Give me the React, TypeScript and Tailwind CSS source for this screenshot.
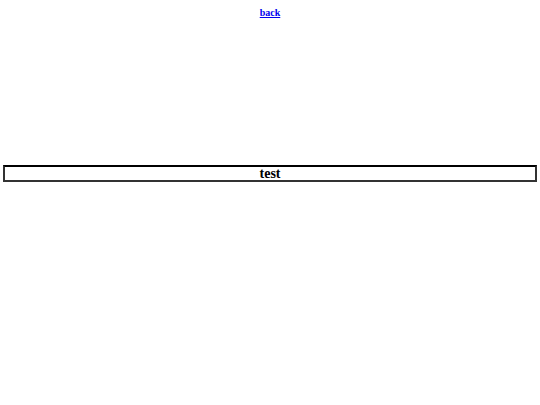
const serif = "[font-family:'Liberation_Serif',serif]";

export default function App() {
  return (
    <div className={`min-h-screen bg-white text-black ${serif}`}>
      <div className="pt-[7px] text-center text-[10px] leading-[11px]">
        <a href="#" className="font-bold text-[#0000ee] underline">
          back
        </a>
      </div>
      <div className="mx-[3px] mt-[147px] border-2 border-[#333] border-t-black text-center">
        <h2 className="text-[14px] font-bold leading-[13px]">test</h2>
      </div>
    </div>
  );
}
